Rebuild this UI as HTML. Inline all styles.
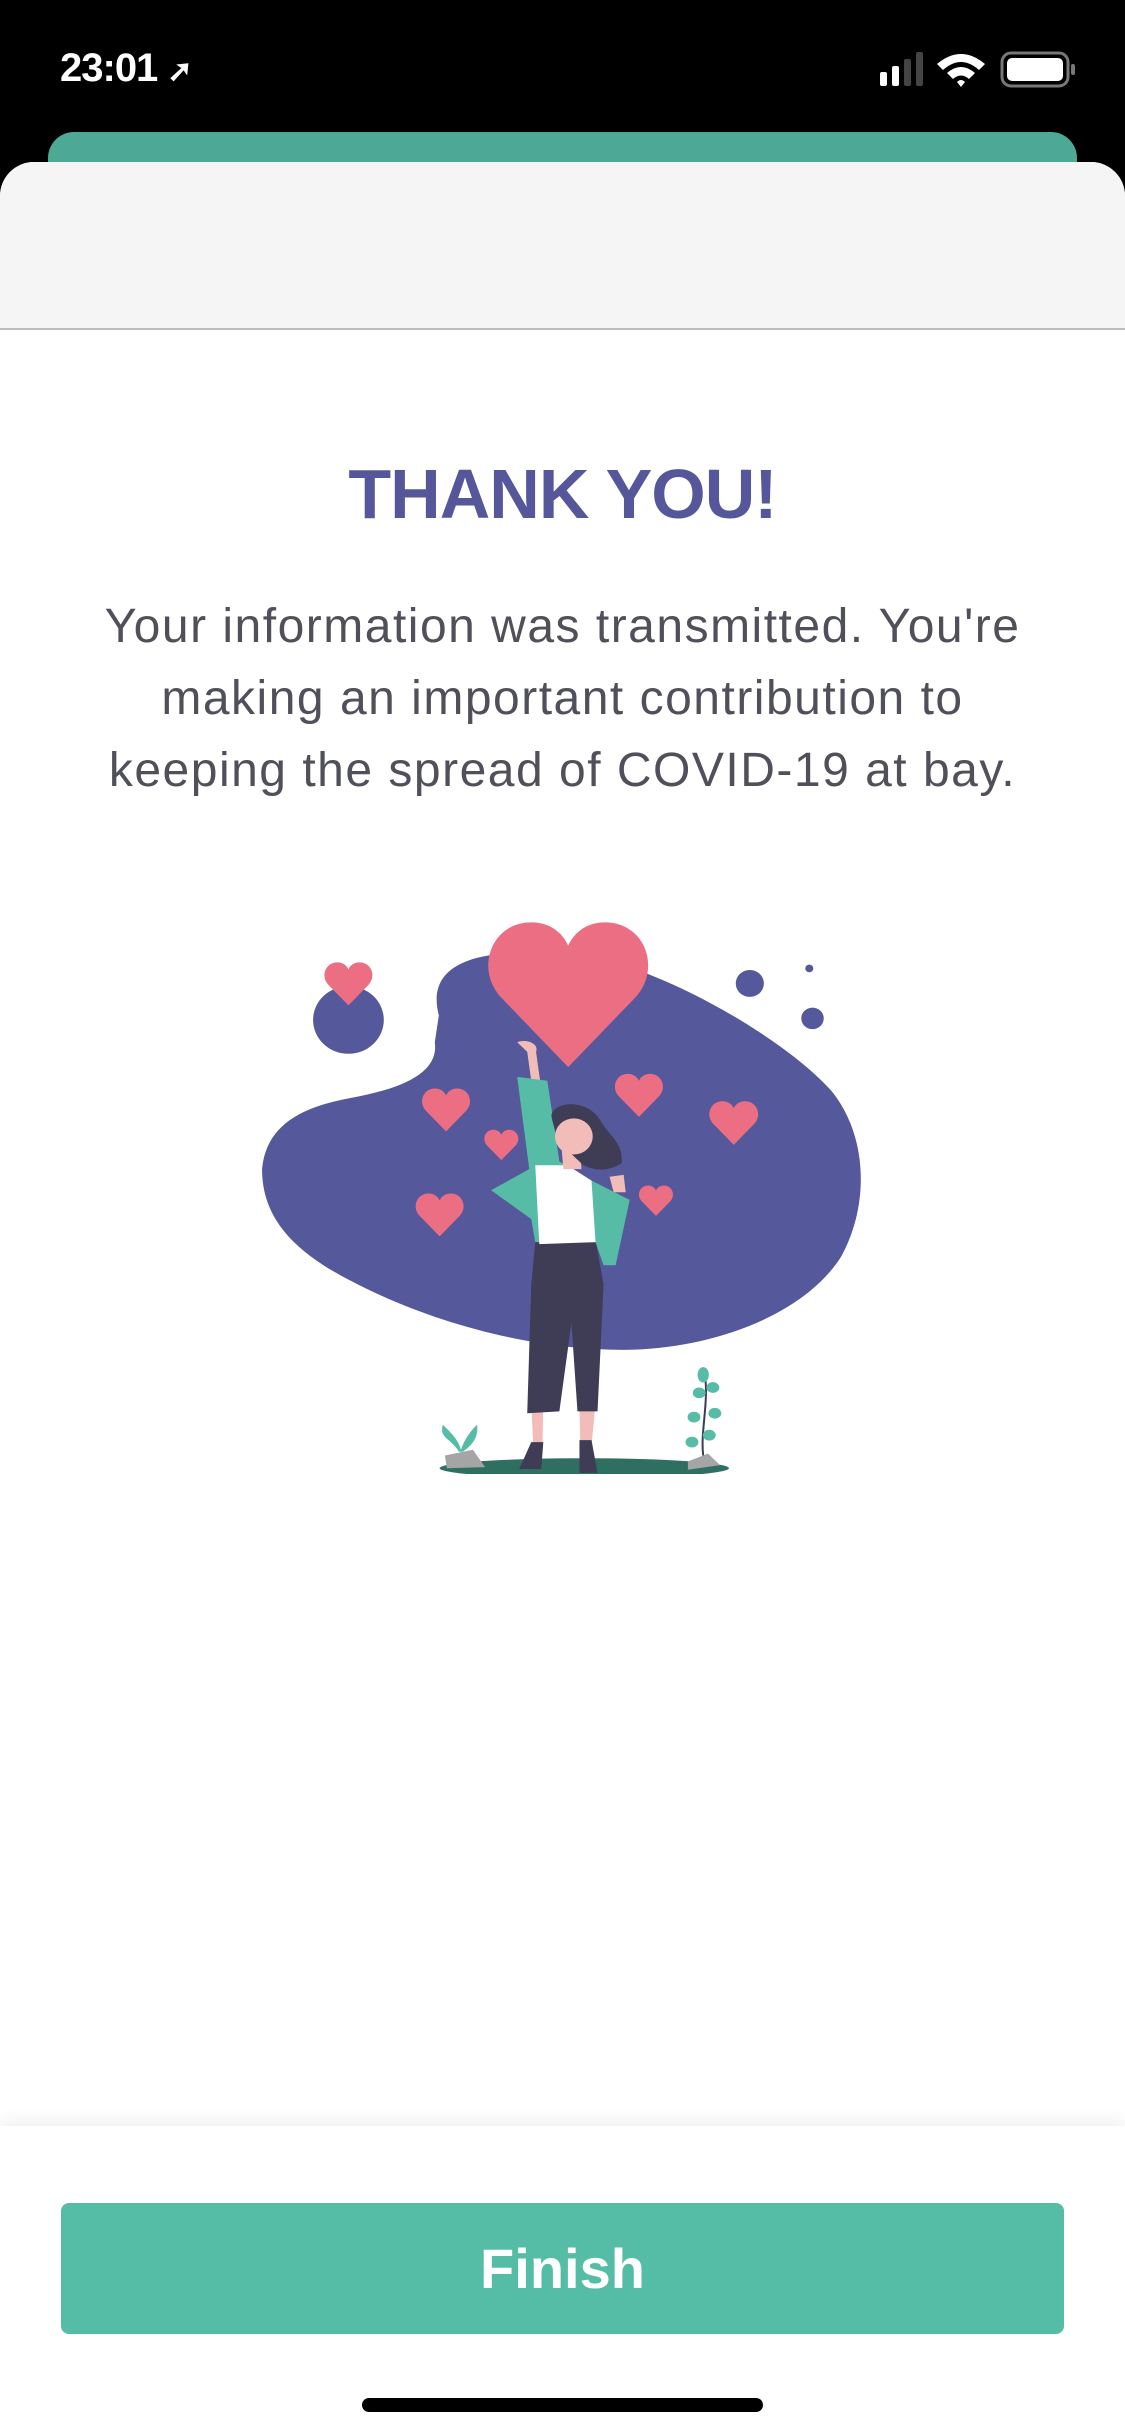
<!DOCTYPE html>
<html><head><meta charset="utf-8"><style>
*{margin:0;padding:0;box-sizing:border-box}
html,body{width:1125px;height:2436px;background:#000;overflow:hidden;font-family:"Liberation Sans",sans-serif}
.status{position:absolute;left:0;top:0;width:1125px;height:140px;background:#000}
.time{position:absolute;left:60px;top:46px;color:#fff;font-size:40px;font-weight:600;letter-spacing:-1px}
.teal{position:absolute;left:48px;top:132px;width:1029px;height:60px;background:#4ea896;border-radius:26px 26px 0 0}
.sheet{position:absolute;left:0;top:162px;width:1125px;height:2274px;background:#fff;border-radius:34px 34px 0 0;overflow:hidden}
.head{height:168px;background:#f5f5f5;border-bottom:2px solid #bdbdbd}
h1{position:absolute;top:292px;width:100%;text-align:center;color:#55579a;font-size:70px;font-weight:700;letter-spacing:-1px}
p{position:absolute;top:429px;width:100%;text-align:center;color:#50505a;font-size:48px;line-height:72px;letter-spacing:1.5px}
.foot{position:absolute;left:0;top:1964px;width:1125px;height:310px;background:#fff;box-shadow:0 -6px 14px rgba(0,0,0,0.06)}
.btn{position:absolute;left:61px;top:77px;width:1003px;height:131px;background:#55bca6;border-radius:8px;color:#fff;font-size:56px;font-weight:700;text-align:center;line-height:131px}
.home{position:absolute;left:362px;top:2398px;width:401px;height:14px;background:#000;border-radius:7px}
</style></head><body>
<div class="status"><div class="time">23:01 <span style="font-size:30px">➚</span></div>
<svg style="position:absolute;left:875px;top:50px" width="210" height="40" viewBox="0 0 210 40">
<rect x="5" y="22" width="7" height="14" rx="2" fill="#fff"/><rect x="17" y="16" width="7" height="20" rx="2" fill="#fff"/><rect x="29" y="9" width="7" height="27" rx="2" fill="#444"/><rect x="41" y="2" width="7" height="34" rx="2" fill="#444"/>
<path d="M62 14 Q86 -6 110 14 L104 20 Q86 4 68 20 Z M72 23 Q86 11 100 23 L94 29 Q86 22 78 29 Z M82 32 Q86 28 90 32 L86 37 Z" fill="#fff"/>
<rect x="127" y="3" width="66" height="33" rx="9" fill="none" stroke="#777" stroke-width="3"/><rect x="132" y="8" width="56" height="23" rx="5" fill="#fff"/><rect x="196" y="14" width="4" height="11" rx="2" fill="#777"/>
</svg></div>
<div class="teal"></div>
<div class="sheet">
<div class="head"></div>
<h1>THANK YOU!</h1>
<p>Your information was transmitted. You're<br>making an important contribution to<br>keeping the spread of COVID-19 at bay.</p>
<svg style="position:absolute;left:250px;top:738px" width="630" height="574" viewBox="0 0 1568 1493" preserveAspectRatio="none">
<defs><path id="h" d="M50,95 L8,50 C-8,32 2,2 27,2 C40,2 47,10 50,17 C53,10 60,2 73,2 C98,2 108,32 92,50 Z" fill="#eb6e83"/></defs>
<path d="M470,300 C440,180 540,150 620,140 L900,160 C1100,220 1350,380 1450,500 C1540,620 1540,800 1470,930 C1370,1090 1130,1170 930,1170 C700,1170 450,1100 250,990 C100,910 30,820 30,700 C40,590 120,540 250,515 C380,490 470,450 460,370 Z" fill="#55589b"/>
<circle cx="245" cy="312" r="88" fill="#55589b"/>
<circle cx="1244" cy="217" r="35" fill="#55589b"/><circle cx="1400" cy="308" r="28" fill="#55589b"/><circle cx="1392" cy="178" r="10" fill="#55589b"/>
<use href="#h" transform="translate(592,50) scale(4,4.05)"/>
<use href="#h" transform="translate(185,160) scale(1.2)"/>
<use href="#h" transform="translate(428,488) scale(1.2)"/>
<use href="#h" transform="translate(583,596) scale(0.85)"/>
<use href="#h" transform="translate(908,450) scale(1.2)"/>
<use href="#h" transform="translate(1143,521) scale(1.22)"/>
<use href="#h" transform="translate(412,761) scale(1.2)"/>
<use href="#h" transform="translate(968,741) scale(0.85)"/>
<ellipse cx="832" cy="1478" rx="360" ry="26" fill="#2f6f62"/>
<path d="M485,1445 L555,1430 L585,1475 L490,1478 Z" fill="#a5a5a5"/>
<path d="M1090,1460 L1140,1440 L1170,1470 L1090,1482 Z" fill="#a5a5a5"/>
<path d="M520,1435 C500,1400 470,1400 480,1365 C510,1395 520,1410 525,1430 C535,1400 550,1380 565,1365 C570,1400 550,1420 530,1435 Z" fill="#56bca6"/>
<path d="M1128,1445 C1120,1380 1145,1300 1130,1220" stroke="#3f3d56" stroke-width="5" fill="none"/>
<g fill="#56bca6"><ellipse cx="1128" cy="1235" rx="14" ry="20"/><ellipse cx="1152" cy="1268" rx="16" ry="14"/><ellipse cx="1118" cy="1282" rx="16" ry="14"/><ellipse cx="1157" cy="1335" rx="16" ry="14"/><ellipse cx="1105" cy="1345" rx="16" ry="14"/><ellipse cx="1143" cy="1392" rx="16" ry="14"/><ellipse cx="1100" cy="1410" rx="16" ry="14"/></g>
<path d="M700,1310 L730,1310 L728,1420 L705,1420 Z M820,1310 L860,1310 L850,1420 L822,1420 Z" fill="#f2bdb8"/>
<path d="M700,1410 L730,1410 L725,1480 L670,1480 Z M820,1405 L850,1405 L865,1490 L820,1490 Z" fill="#3f3d56"/>
<path d="M710,890 L860,885 L880,1000 L865,1330 L815,1330 L800,1100 L770,1330 L690,1335 L700,1000 Z" fill="#3f3d56"/>
<path d="M665,370 C690,360 720,375 712,395 L722,470 L700,470 L690,395 Z" fill="#f2bdb8"/>
<path d="M895,720 L930,715 L935,760 L905,760 Z" fill="#f2bdb8"/>
<path d="M665,460 L740,470 L770,680 L850,730 L945,780 L910,950 L880,950 L860,890 L710,890 L700,830 L600,755 L695,700 Z" fill="#56bca6"/>
<path d="M710,690 L790,690 L850,730 L860,890 L720,895 Z" fill="#fff"/>
<path d="M775,640 L820,640 L825,700 L780,700 Z" fill="#f2bdb8"/>
<path d="M750,560 C760,520 840,520 870,570 C890,610 930,630 925,685 C900,700 870,710 830,690 C800,660 760,630 750,560 Z" fill="#3f3d56"/>
<circle cx="806" cy="615" r="47" fill="#f2bdb8"/>
<path d="M760,585 C775,555 830,555 855,585 L858,560 C840,530 770,530 752,565 Z" fill="#3f3d56"/>
</svg>
<div class="foot"><div class="btn">Finish</div></div>
</div>
<div class="home"></div>
</body></html>
